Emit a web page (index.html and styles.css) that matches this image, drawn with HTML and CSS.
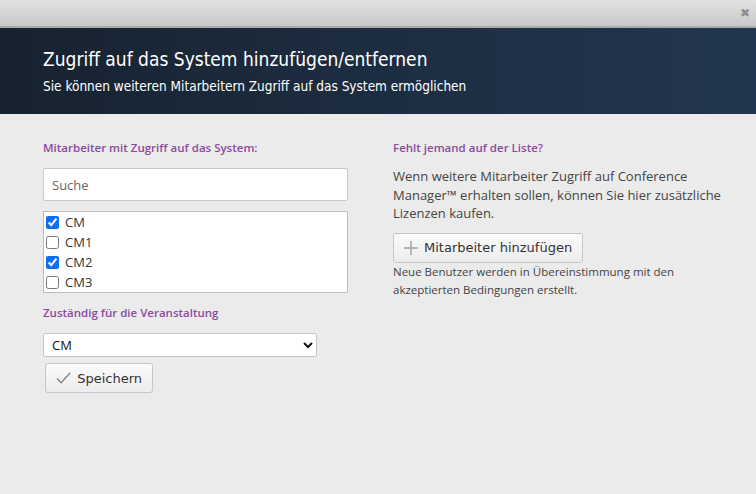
FILE: index.html
```html
<!DOCTYPE html>
<html lang="de">
<head>
    <meta charset="UTF-8">
    <title>Zugriff auf das System</title>
    <link rel="stylesheet" href="styles.css">
</head>
<body>
    <div class="dialog">
        <!-- Title bar -->
        <div class="titlebar">
            <span class="close">&#10006;</span>
        </div>

        <!-- Header -->
        <div class="header">
            <h1>Zugriff auf das System hinzufügen/entfernen</h1>
            <p>Sie können weiteren Mitarbeitern Zugriff auf das System ermöglichen</p>
        </div>

        <div class="content">
            <div class="col left">
                <div class="label">Mitarbeiter mit Zugriff auf das System:</div>
                <input type="text" class="search" placeholder="Suche">
                <div class="userlist">
                    <label class="user"><input type="checkbox" checked> CM</label>
                    <label class="user"><input type="checkbox"> CM1</label>
                    <label class="user"><input type="checkbox" checked> CM2</label>
                    <label class="user"><input type="checkbox"> CM3</label>
                </div>
                <div class="label label-second">Zuständig für die Veranstaltung</div>
                <select class="owner">
                    <option>CM</option>
                    <option>CM1</option>
                    <option>CM2</option>
                    <option>CM3</option>
                </select>
                <button class="btn btn-save">
                    <svg width="16" height="14" viewBox="0 0 16 14"><path d="M1 7.5 L5.5 12 L15 1.5" fill="none" stroke="#8a8a8a" stroke-width="1.6"/></svg>
                    Speichern
                </button>
            </div>

            <div class="col right">
                <div class="label">Fehlt jemand auf der Liste?</div>
                <p class="text">Wenn weitere Mitarbeiter Zugriff auf Conference Manager™ erhalten sollen, können Sie hier zusätzliche Lizenzen kaufen.</p>
                <button class="btn btn-add">
                    <svg width="14" height="14" viewBox="0 0 14 14"><path d="M7 0 V14 M0 7 H14" stroke="#a0a0a0" stroke-width="1.4"/></svg>
                    Mitarbeiter hinzufügen
                </button>
                <p class="note">Neue Benutzer werden in Übereinstimmung mit den akzeptierten Bedingungen erstellt.</p>
            </div>
        </div>
    </div>
</body>
</html>
```

FILE: styles.css
```css
body {
    margin: 0;
    font-family: "Open Sans", "Noto Sans", sans-serif;
    background-color: #ebebeb;
    width: 756px;
    height: 494px;
    overflow: hidden;
}
.dialog {
    width: 756px;
}
.titlebar {
    height: 26px;
    background: linear-gradient(#e2e2e2, #c9c9c9);
    border-bottom: 2px solid #a9a9a9;
    display: flex;
    justify-content: flex-end;
    align-items: center;
    padding-right: 6px;
}
.close {
    color: #8f8f8f;
    font-size: 12px;
    font-family: "DejaVu Sans", sans-serif;
    font-weight: bold;
}
.header {
    height: 86px;
    box-sizing: border-box;
    padding: 18px 43px 0;
    background: linear-gradient(90deg, #17222f, #1e2f44 60%, #22364f);
    color: white;
}
.header h1 {
    margin: 0;
    font-family: "Liberation Sans Narrow", "DejaVu Sans Condensed", sans-serif;
    font-weight: normal;
    font-size: 19px;
    line-height: 26px;
}
.header p {
    margin: 6px 0 0;
    font-family: "Liberation Sans Narrow", "DejaVu Sans Condensed", sans-serif;
    font-size: 13.5px;
}
.content {
    display: flex;
    padding: 26px 0 0 43px;
}
.col.left {
    width: 305px;
    margin-right: 45px;
}
.col.right {
    width: 340px;
}
.label {
    color: #8b4aa2;
    font-size: 11.5px;
    font-weight: 600;
    line-height: 16px;
}
.search {
    display: block;
    box-sizing: border-box;
    width: 305px;
    height: 33px;
    margin-top: 12px;
    padding: 0 8px;
    border: 1px solid #c9c9c9;
    border-radius: 2px;
    font-family: inherit;
    font-size: 13px;
    outline: none;
}
.search::placeholder {
    color: #666;
}
.userlist {
    box-sizing: border-box;
    width: 305px;
    height: 82px;
    margin-top: 10px;
    padding: 0 0 0 1px;
    background: white;
    border: 1px solid #bdbdbd;
}
.user {
    display: flex;
    align-items: center;
    height: 20px;
    font-size: 13px;
    color: #333;
}
.user input {
    width: 13px;
    height: 13px;
    margin: 0 6px 0 1px;
    accent-color: #0b6cf5;
}
.label-second {
    margin-top: 12px;
}
.owner {
    display: block;
    width: 274px;
    height: 24px;
    margin-top: 12px;
    padding: 0 4px;
    border: 1px solid #c5c5c5;
    border-radius: 2px;
    background: white;
    font-family: inherit;
    font-size: 13px;
    color: #111;
}
.btn {
    display: flex;
    align-items: center;
    gap: 6px;
    box-sizing: border-box;
    height: 30px;
    padding: 0 10px;
    border: 1px solid #c6c6c6;
    border-radius: 3px;
    background: linear-gradient(#fbfbfb, #ececec);
    font-family: "DejaVu Sans", sans-serif;
    font-size: 13px;
    color: #333;
    white-space: nowrap;
}
.btn-save {
    margin: 6px 0 0 2px;
    width: 108px;
}
.btn-add {
    margin-top: 10px;
}
.text {
    margin: 11px 0 0;
    font-size: 13px;
    line-height: 18.5px;
    color: #444;
}
.note {
    width: 310px;
    margin: 0;
    font-size: 11.5px;
    line-height: 18px;
    color: #444;
}
```
